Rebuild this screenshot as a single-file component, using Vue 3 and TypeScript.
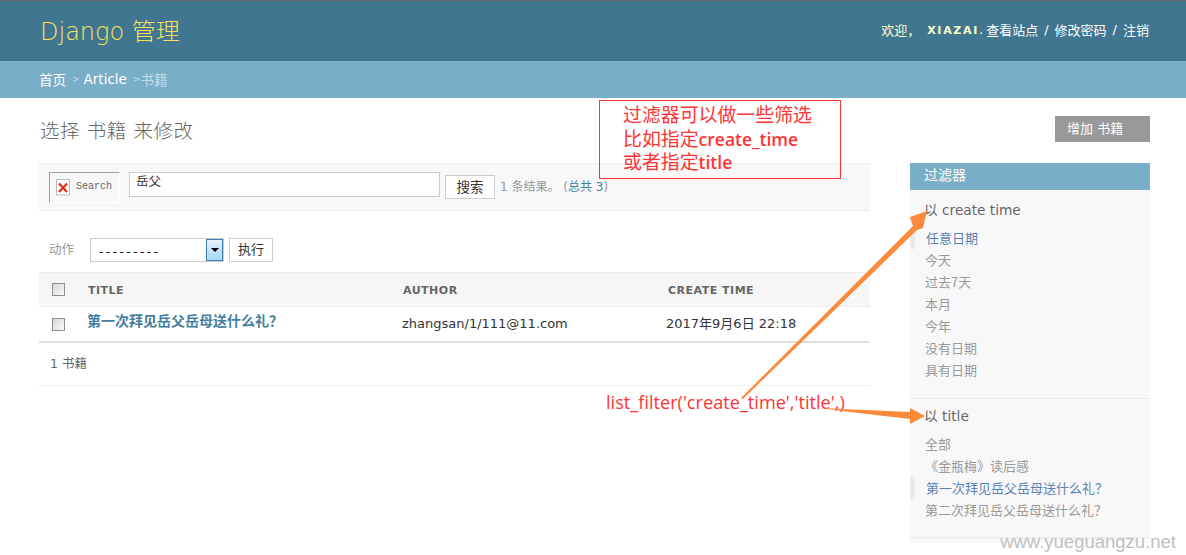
<script setup lang="ts">
interface Filter { title: string; items: { label: string; selected?: boolean }[] }
const filters: Filter[] = [
  { title: '以 create time', items: [
    { label: '任意日期', selected: true }, { label: '今天' }, { label: '过去7天' }, { label: '本月' },
    { label: '今年' }, { label: '没有日期' }, { label: '具有日期' } ] },
  { title: '以 title', items: [
    { label: '全部' }, { label: '《金瓶梅》读后感' }, { label: '第一次拜见岳父岳母送什么礼？', selected: true },
    { label: '第二次拜见岳父岳母送什么礼？' } ] },
]
</script>

<template>
  <div class="page">
    <header class="header">
      <div class="brand">Django 管理</div>
      <div class="tools">
        <span>欢迎，</span><strong>XIAZAI</strong><span class="dot">.</span>
        <a>查看站点</a><span class="sl">/</span><a>修改密码</a><span class="sl">/</span><a>注销</a>
      </div>
    </header>
    <nav class="crumbs">
      <a>首页</a><span class="sep">&gt;</span><a>Article</a><span class="sep">&gt;</span><span class="cur">书籍</span>
    </nav>
    <main class="content">
      <div class="title-row">
        <h1>选择 书籍 来修改</h1>
        <a class="add">增加 书籍</a>
      </div>
      <div class="columns">
        <section class="list">
          <div class="toolbar">
            <div class="broken">
              <svg class="broken-icon" width="16" height="17" viewBox="0 0 16 17">
                <rect x="0.5" y="0.5" width="13" height="15.5" fill="#fff" stroke="#bbb" />
                <path d="M3 4.5 L11 13 M11 4.5 L3 13" stroke="#e0301e" stroke-width="2.4" />
              </svg>
              <span>Search</span>
            </div>
            <div class="search-input">岳父</div>
            <button class="btn search-btn">搜索</button>
            <span class="result">1 条结果。 (<a>总共 3</a>)</span>
          </div>
          <div class="actions">
            <span class="act-label">动作</span>
            <div class="select">
              <span class="dashes">---------</span>
              <span class="drop"><i></i></span>
            </div>
            <button class="btn go">执行</button>
          </div>
          <div class="row head">
            <span class="cb"></span>
            <span class="c1">TITLE</span>
            <span class="c2">AUTHOR</span>
            <span class="c3">CREATE TIME</span>
          </div>
          <div class="row body">
            <span class="cb"></span>
            <a class="c1 link">第一次拜见岳父岳母送什么礼？</a>
            <span class="c2">zhangsan/1/111@11.com</span>
            <span class="c3">2017年9月6日 22:18</span>
          </div>
          <div class="paginator">1 书籍</div>
        </section>
        <aside class="filter">
          <h2>过滤器</h2>
          <div v-for="f in filters" :key="f.title" class="group">
            <h3>{{ f.title }}</h3>
            <ul>
              <li v-for="i in f.items" :key="i.label" :class="{ sel: i.selected }">{{ i.label }}</li>
            </ul>
          </div>
        </aside>
      </div>
    </main>

    <div class="note">过滤器可以做一些筛选<br />比如指定<b>create_time</b><br />或者指定<b>title</b></div>
    <div class="code">list_filter('create_time','title',)</div>
    <svg class="arrows" width="1186" height="555" viewBox="0 0 1186 555">
      <polygon fill="#fb8a3c" points="741,398 913,226 910,217 927,211 923,228 917,230 743,399" />
      <polygon fill="#fb8a3c" points="820,408 910,412 910,408 925,416 910,424 910,419 850,412" />
    </svg>
    <div class="mark">www.yueguangzu.net</div>
  </div>
</template>

<style>
html, body { margin: 0; background: #fff; }
</style>

<style scoped>
.page {
  position: relative; width: 1186px; height: 555px; overflow: hidden;
  font-family: "DejaVu Sans", "Noto Sans CJK SC", sans-serif; font-size: 13px; color: #333;
}
.header {
  box-sizing: border-box; height: 61px; background: #417690; border-top: 1px solid #666;
  display: flex; align-items: center; justify-content: space-between; padding: 0 37px 4px 40px;
}
.brand { font-size: 24px; color: #f9e15f; font-weight: 300; line-height: 30px; margin-top: 6px; }
.tools { display: flex; align-items: center; font-size: 13px; color: #ffc; }
.tools strong { font-size: 11px; letter-spacing: 1.7px; margin-left: 7px; padding-top: 2px; }
.tools a { color: #fff; }
.dot { margin-right: 3px; }
.sl { margin: 0 6px; color: #fff; }
.crumbs {
  box-sizing: border-box; height: 37px; background: #79aec8; display: flex; align-items: center;
  padding: 0 0 2px 39px; font-size: 13.5px; color: #fff;
}
.sep { margin: 0 4px 0 6px; color: #c4dce8; font-size: 9px; }
.cur { color: #c4dce8; margin-left: -4px; }
.content { padding: 18px 36px 0 39px; }
.title-row { display: flex; justify-content: space-between; align-items: flex-start; height: 47px; }
h1 { margin: 1px 0 0 1px; font-size: 19.5px; font-weight: 300; color: #666; line-height: 30px; letter-spacing: .5px; }
.add {
  box-sizing: border-box; width: 95px; height: 26px; background: #999; color: #fff; font-size: 13px;
  padding-left: 12px; line-height: 25px;
}
.columns { display: flex; justify-content: space-between; align-items: flex-start; }
.list { width: 831px; }
.toolbar {
  box-sizing: border-box; height: 48px; background: #f8f8f8; border-top: 1px solid #eee; border-bottom: 1px solid #eee;
  display: flex; align-items: flex-start; padding: 8px 0 0 10px;
}
.broken {
  box-sizing: border-box; width: 71px; height: 31px; border: 1px solid #a0a0a0; border-right-color: #fff; border-bottom-color: #fff;
  display: flex; align-items: center; padding: 0 0 3px 6px; gap: 4px;
  font-family: "Liberation Mono", monospace; font-size: 10px; color: #666;
}
.broken-icon { flex: none; margin-top: 2px; }
.search-input {
  box-sizing: border-box; width: 311px; height: 25px; margin-left: 9px; background: #fff; border: 1px solid #ccc;
  padding-left: 6px; font-size: 12.5px; line-height: 17px; color: #333;
}
.btn {
  box-sizing: border-box; background: #fff; border: 1px solid #ccc; padding: 0 0 4px; color: #333;
  font-family: "Noto Sans CJK SC", sans-serif; font-size: 13.5px;
}
.search-btn { width: 50px; height: 24px; margin: 3px 0 0 5px; }
.result { margin: 6px 0 0 5px; font-size: 12px; color: #999; line-height: 18px; }
.result a { color: #447e9b; }
.actions { display: flex; align-items: center; height: 24px; margin-top: 27px; padding-left: 10px; }
.act-label { width: 41px; color: #999; font-size: 12.5px; margin-bottom: 3px; }
.select {
  box-sizing: border-box; position: relative; width: 134px; height: 24px; background: #fff; border: 1px solid #ccc;
  padding-left: 8px; line-height: 25px;
}
.dashes { letter-spacing: 2.1px; color: #222; font-size: 13px; }
.drop {
  position: absolute; right: 0; top: 0; box-sizing: border-box; width: 17px; height: 22px; border: 1px solid #3d7fae;
  background: linear-gradient(#e6f2fb, #a9d8f8); display: flex; align-items: center; justify-content: center;
}
.drop i { width: 0; height: 0; border: 4px solid transparent; border-top: 4px solid #000; border-bottom: 0; }
.go { width: 44px; height: 24px; margin-left: 5px; font-size: 13px; padding-bottom: 4px; }
.row { position: relative; display: flex; align-items: center; }
.head {
  box-sizing: border-box; height: 35px; margin-top: 10px; background: #f6f6f6; border-top: 1px solid #eee; border-bottom: 1px solid #eee;
  font-size: 11px; font-weight: 700; color: #666; letter-spacing: .5px; padding-top: 1px;
}
.body { box-sizing: border-box; height: 36px; border-bottom: 2px solid #ddd; padding-bottom: 4px; }
.cb {
  box-sizing: border-box; position: absolute; left: 13px; top: 10px; width: 13px; height: 13px;
  border: 1px solid #8f8f8f; background: linear-gradient(135deg, #d8d8d8, #f8f8f8);
}
.body .cb { top: 11px; }
.c1 { margin-left: 49px; width: 315px; flex: none; }
.c2 { width: 265px; flex: none; }
.body .c1 { margin-left: 48px; }
.link { color: #447e9b; font-weight: 700; font-size: 14px; white-space: nowrap; font-family: "Noto Sans CJK SC", sans-serif; margin-bottom: 5px; }
.body .c2 { color: #333; font-size: 13px; margin-top: 2px; white-space: nowrap; }
.body .c3 { color: #333; font-size: 13px; margin: 0 0 0 -1px; white-space: nowrap; }
.paginator {
  box-sizing: border-box; height: 43px; padding: 12px 0 0 11px; border-bottom: 1px solid #eee; color: #666; font-size: 12.5px; line-height: 18px;
}
.filter { box-sizing: border-box; width: 240px; height: 380px; background: #f8f8f8; }
h2 {
  margin: 0; height: 27px; background: #79aec8; color: #fff; font-size: 14px; font-weight: 400; line-height: 25px; padding-left: 14px;
}
.group { box-sizing: border-box; border-bottom: 1px solid #eaeaea; padding-top: 10px; }
.group:nth-of-type(1) { height: 209px; }
.group:nth-of-type(2) { height: 139px; padding-top: 7px; }
.group:nth-of-type(2) ul { margin-top: 7px; }
h3 { margin: 0 0 0 14px; font-size: 13.7px; font-weight: 400; color: #666; line-height: 20px; }
ul { list-style: none; margin: 7px 0 0; padding: 0; }
li {
  height: 22px; line-height: 22px; padding-left: 15px; font-size: 13px; color: #999; white-space: nowrap;
  font-family: "Noto Sans CJK SC", sans-serif;
}
li.sel { color: #5b80b2; border-left: 5px solid #eaeaea; padding-left: 11px; }
.note {
  box-sizing: border-box; position: absolute; left: 599px; top: 100px; width: 242px; height: 79px; border: 1px solid #f33;
  padding: 1px 0 0 23px; color: #f33; font-family: "Noto Sans CJK SC", sans-serif; font-size: 18.9px; line-height: 23.5px;
}
.note b { font-family: "Open Sans", sans-serif; font-weight: 600; font-size: 17.5px; line-height: 1; }
.code {
  position: absolute; left: 606px; top: 389px; color: #f33; font-family: "Open Sans", sans-serif; font-size: 18.15px; line-height: 26px; white-space: nowrap;
}
.arrows { position: absolute; left: 0; top: 0; pointer-events: none; }
.mark {
  position: absolute; right: 10px; bottom: 1px; font-family: "Liberation Sans", sans-serif; font-size: 18.5px; color: #c0c0c0; line-height: 24px;
}
</style>
